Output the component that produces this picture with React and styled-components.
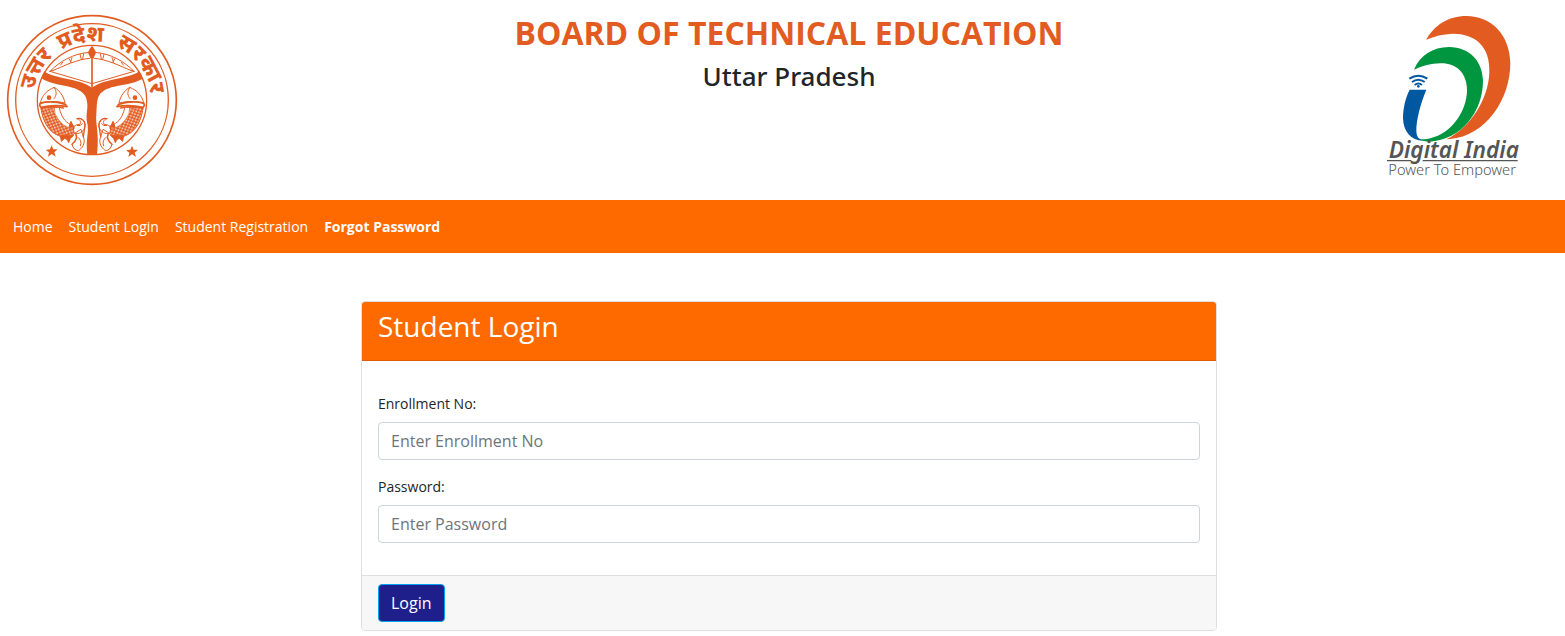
import React from "react";
import styled, { createGlobalStyle } from "styled-components";

const brand = "#ff6a00";
const rust = "#e25c22";

const GlobalStyle = createGlobalStyle`
  *, *::before, *::after { box-sizing: border-box; }
  body {
    margin: 0;
    background: #fff;
    color: #212529;
    font-family: "Open Sans", "Noto Sans", sans-serif;
    font-size: 14px;
    line-height: 21px;
  }
`;

const Header = styled.header`
  display: grid;
  grid-template-columns: 1fr auto 1fr;
  align-items: start;
  height: 200px;
`;

const EmblemArt = styled.svg`
  width: 184px;
  height: 184px;
  margin-top: 8px;
`;

const DigitalIndiaArt = styled.svg`
  width: 170px;
  height: 186px;
  margin: 5px 25px 0 0;
  justify-self: end;
`;

const Titles = styled.div`
  padding: 14px 0 0 13px;
  text-align: center;
`;

const BoardName = styled.h1`
  margin: 0;
  color: ${rust};
  font-size: 32px;
  line-height: 38px;
  font-weight: 700;
`;

const StateName = styled.h2`
  margin: 8px 0 0;
  color: #212529;
  font-family: "Noto Sans", "Open Sans", sans-serif;
  font-size: 26px;
  line-height: 32px;
  font-weight: 500;
`;

const Nav = styled.nav`
  display: flex;
  gap: 16px;
  padding: 16px 13px;
  background: ${brand};
`;

const NavLink = styled.a`
  color: #fff;
  text-decoration: none;
  font-weight: ${(p) => (p.$strong ? 700 : 400)};
`;

const Main = styled.main`
  padding: 48px 0 5px 13px;
`;

const Card = styled.form`
  max-width: 856px;
  margin: 0 auto;
  border: 1px solid #dfdfdf;
  border-radius: 4px;
  overflow: hidden;
`;

const CardHeader = styled.div`
  padding: 8px 16px 18px;
  background: ${brand};
  border-bottom: 1px solid #dd5f06;
`;

const CardTitle = styled.h3`
  margin: 0;
  color: #fff;
  font-size: 28px;
  line-height: 32px;
  font-weight: 400;
`;

const CardBody = styled.div`
  display: flex;
  flex-direction: column;
  gap: 16px;
  padding: 32px 16px;
`;

const Field = styled.div`
  display: flex;
  flex-direction: column;
  gap: 8px;
`;

const Label = styled.label`
  line-height: 21px;
`;

const Input = styled.input`
  width: 100%;
  height: 38px;
  padding: 6px 12px;
  border: 1px solid #ced4da;
  border-radius: 4px;
  background: #fff;
  color: #495057;
  font: 400 16px/24px "Open Sans", "Noto Sans", sans-serif;
  &::placeholder { color: #6c757d; opacity: 1; }
`;

const CardFooter = styled.div`
  display: flex;
  padding: 8px 16px;
  background: #f7f7f7;
  border-top: 1px solid #dfdfdf;
`;

const LoginButton = styled.button`
  height: 38px;
  padding: 6px 12px;
  border: 1px solid #00a4ef;
  border-radius: 4px;
  background: #1f1f8b;
  color: #fff;
  font: 400 16px/24px "Open Sans", "Noto Sans", sans-serif;
  cursor: pointer;
`;

const star = "M0-18 5-6 18-6 8 3 12 16 0 8-11 16-8 3-18-4-5-6Z";

function Emblem() {
  return (
    <EmblemArt viewBox="0 0 552 552" role="img" aria-label="Uttar Pradesh Government emblem">
      <defs>
        <pattern id="scales" width="13" height="12" patternUnits="userSpaceOnUse" patternTransform="rotate(24)">
          <rect width="13" height="12" fill={rust} />
          <ellipse cx="4" cy="3" rx="3" ry="2" fill="#fff" />
          <ellipse cx="10" cy="9" rx="3" ry="2" fill="#fff" />
        </pattern>
        <path id="arc" d="M100 276A176 176 0 0 1 452 276" />
        <g id="half" fill="none" stroke={rust} strokeWidth="3" strokeLinejoin="round" strokeLinecap="round">
          <path d="M150 190C178 161 220 136 269 133M160 187C192 174 230 154 269 151M150 190 276 227" />
          <path d="M150 190 160 187M188 163 182 171M207 152 214 163M216 149 211 163M240 139 244 154M251 137 248 153" />
          <path fill="#fff" d="M121 285C127 260 140 248 163 238C179 248 191 264 195 285Q160 276 121 285Z" />
          <path d="M163 239C172 253 169 263 162 272" />
          <circle cx="147" cy="269" r="7" fill={rust} stroke="none" />
          <path fill="#fff" d="M123 300C128 336 144 370 174 382C193 391 211 386 223 377L240 358C213 355 193 340 187 325Q179 311 178 299Z" />
          <path fill="url(#scales)" strokeWidth="2" d="M123 300C128 336 144 370 174 382C193 391 211 386 223 377L230 364C205 364 186 350 174 333Q162 318 163 301Z" />
          <path strokeWidth="5" d="M120 286Q154 276 196 289L201 296Q163 289 123 298Q115 290 123 286" />
          <path strokeWidth="4" d="M126 299Q160 292 190 300" />
          <path fill="#fff" d="M222 372C217 358 223 350 240 349C244 341 241 335 231 332C247 327 259 343 254 360C249 372 238 379 224 376ZM226 376C233 390 228 399 216 409C219 421 225 427 236 428C252 415 256 401 250 386L243 365Z" />
          <path strokeWidth="4" d="M231 332C247 327 259 343 254 360L250 386M228 379C233 390 228 399 216 409" />
          <path d="M234 388Q247 398 241 414M232 353Q244 355 247 347" />
          <path fill={rust} d="M181 383 184 400 194 391 202 395 206 404 211 391 220 383ZM207 357 213 340 222 360Z" />
        </g>
      </defs>
      <g fill="none" stroke={rust}>
        <circle cx="276" cy="276" r="253" strokeWidth="5" />
        <circle cx="276" cy="276" r="229" strokeWidth="4" />
        <circle cx="276" cy="276" r="164" strokeWidth="4" />
      </g>
      <use href="#half" />
      <use href="#half" transform="translate(552 0) scale(-1 1)" />
      <path d="M276 150V243" stroke={rust} strokeWidth="5" />
      <path fill={rust} d="M276 113C281 120 284 124 288 133C287 140 282 145 281 151H271C270 145 265 140 264 133C268 124 271 120 276 113Z" />
      <path fill={rust} d="M133 190C163 214 251 213 276 241C301 213 385 214 418 190Q426 201 427 213C383 237 331 227 302 256C289 270 291 293 289 321C286 349 299 377 291 440H262C256 390 269 371 261 343C257 319 265 300 261 281C258 225 160 240 124 210Z" />
      <path fill={rust} transform="translate(155 430)" d={star} />
      <path fill={rust} transform="translate(396 431)" d={star} />
      <g fill={rust} fontFamily="'Noto Sans', sans-serif" fontWeight="800" fontSize="66" textAnchor="middle">
        <text transform="rotate(-61 276 276)"><textPath href="#arc" startOffset="50%">उत्तर</textPath></text>
        <text transform="rotate(-10 276 276)"><textPath href="#arc" startOffset="50%">प्रदेश</textPath></text>
        <text transform="rotate(54 276 276)"><textPath href="#arc" startOffset="50%">सरकार</textPath></text>
      </g>
    </EmblemArt>
  );
}

function DigitalIndia() {
  return (
    <DigitalIndiaArt viewBox="0 0 510 558" role="img" aria-label="Digital India, Power To Empower">
      <path fill={rust} d="M169 104C192 61 235 33 289 33C365 34 419 89 421 174C421 284 347 393 240 402L229 403C303 366 355 281 358 203C361 126 319 86 247 86Q205 88 169 104Z" />
      <path fill="#009640" d="M132 194C150 151 188 126 237 126C300 127 338 169 339 228C339 318 275 405 178 410Q150 410 139 397C150 405 166 404 181 400C245 385 290 320 291 256C291 203 258 174 211 175Q169 176 132 194Z" />
      <path fill="#0058a0" d="M119 254H169C151 298 139 344 139 376C139 394 146 405 160 407C122 406 100 380 99 339C99 308 107 278 119 254Z" />
      <g fill="none" stroke="#0058a0" strokeWidth="6">
        <path d="M118 221Q145 203 172 221M126 231Q145 217 164 231M134 240Q145 231 156 240" />
      </g>
      <circle cx="145" cy="244" r="4" fill="#0058a0" />
      <text x="56" y="458" fill="#555" fontFamily="'Noto Sans', sans-serif" fontSize="68" fontStyle="italic" fontWeight="600">Digital India</text>
      <path d="M51 467H124M158 467H443" stroke="#555" strokeWidth="4" />
      <text x="55" y="510" fill="#555" fontFamily="'Noto Sans', sans-serif" fontSize="44" fontWeight="300">Power To Empower</text>
    </DigitalIndiaArt>
  );
}

export default function App() {
  return (
    <>
      <GlobalStyle />
      <Header>
        <Emblem />
        <Titles>
          <BoardName>BOARD OF TECHNICAL EDUCATION</BoardName>
          <StateName>Uttar Pradesh</StateName>
        </Titles>
        <DigitalIndia />
      </Header>
      <Nav>
        <NavLink href="#home">Home</NavLink>
        <NavLink href="#login">Student Login</NavLink>
        <NavLink href="#registration">Student Registration</NavLink>
        <NavLink href="#forgot" $strong>Forgot Password</NavLink>
      </Nav>
      <Main>
        <Card onSubmit={(e) => e.preventDefault()}>
          <CardHeader>
            <CardTitle>Student Login</CardTitle>
          </CardHeader>
          <CardBody>
            <Field>
              <Label htmlFor="enrollment">Enrollment No:</Label>
              <Input id="enrollment" type="text" placeholder="Enter Enrollment No" />
            </Field>
            <Field>
              <Label htmlFor="password">Password:</Label>
              <Input id="password" type="password" placeholder="Enter Password" />
            </Field>
          </CardBody>
          <CardFooter>
            <LoginButton type="submit">Login</LoginButton>
          </CardFooter>
        </Card>
      </Main>
    </>
  );
}
